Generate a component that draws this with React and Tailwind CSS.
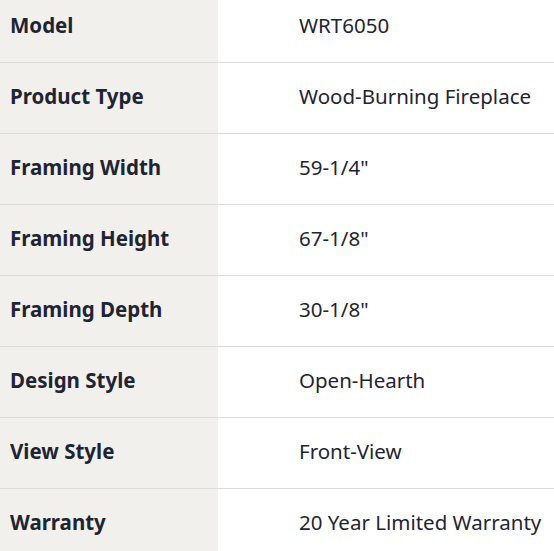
export default function App() {
  const rows = [
    ["Model", "WRT6050"],
    ["Product Type", "Wood-Burning Fireplace"],
    ["Framing Width", "59-1/4\""],
    ["Framing Height", "67-1/8\""],
    ["Framing Depth", "30-1/8\""],
    ["Design Style", "Open-Hearth"],
    ["View Style", "Front-View"],
    ["Warranty", "20 Year Limited Warranty"],
  ];
  return (
    <div className="w-[554px] h-[551px] overflow-hidden bg-white" style={{ fontFamily: '"Noto Sans", "Open Sans", sans-serif' }}>
      <div className="-mt-[9px] flex flex-col">
        {rows.map(([k, v], i) => (
          <div key={k} className={`flex h-[71px] ${i > 0 ? "border-t border-[#dcdcdc]" : ""}`}>
            <div className="w-[218px] bg-[#f1f0ed] flex items-center pl-[10px] pb-[3px] text-[20.5px] font-bold text-[#1f2433]">{k}</div>
            <div className="flex-1 flex items-center pl-[81px] pb-[3px] text-[20.5px] text-[#1f2433]">{v}</div>
          </div>
        ))}
      </div>
    </div>
  );
}
